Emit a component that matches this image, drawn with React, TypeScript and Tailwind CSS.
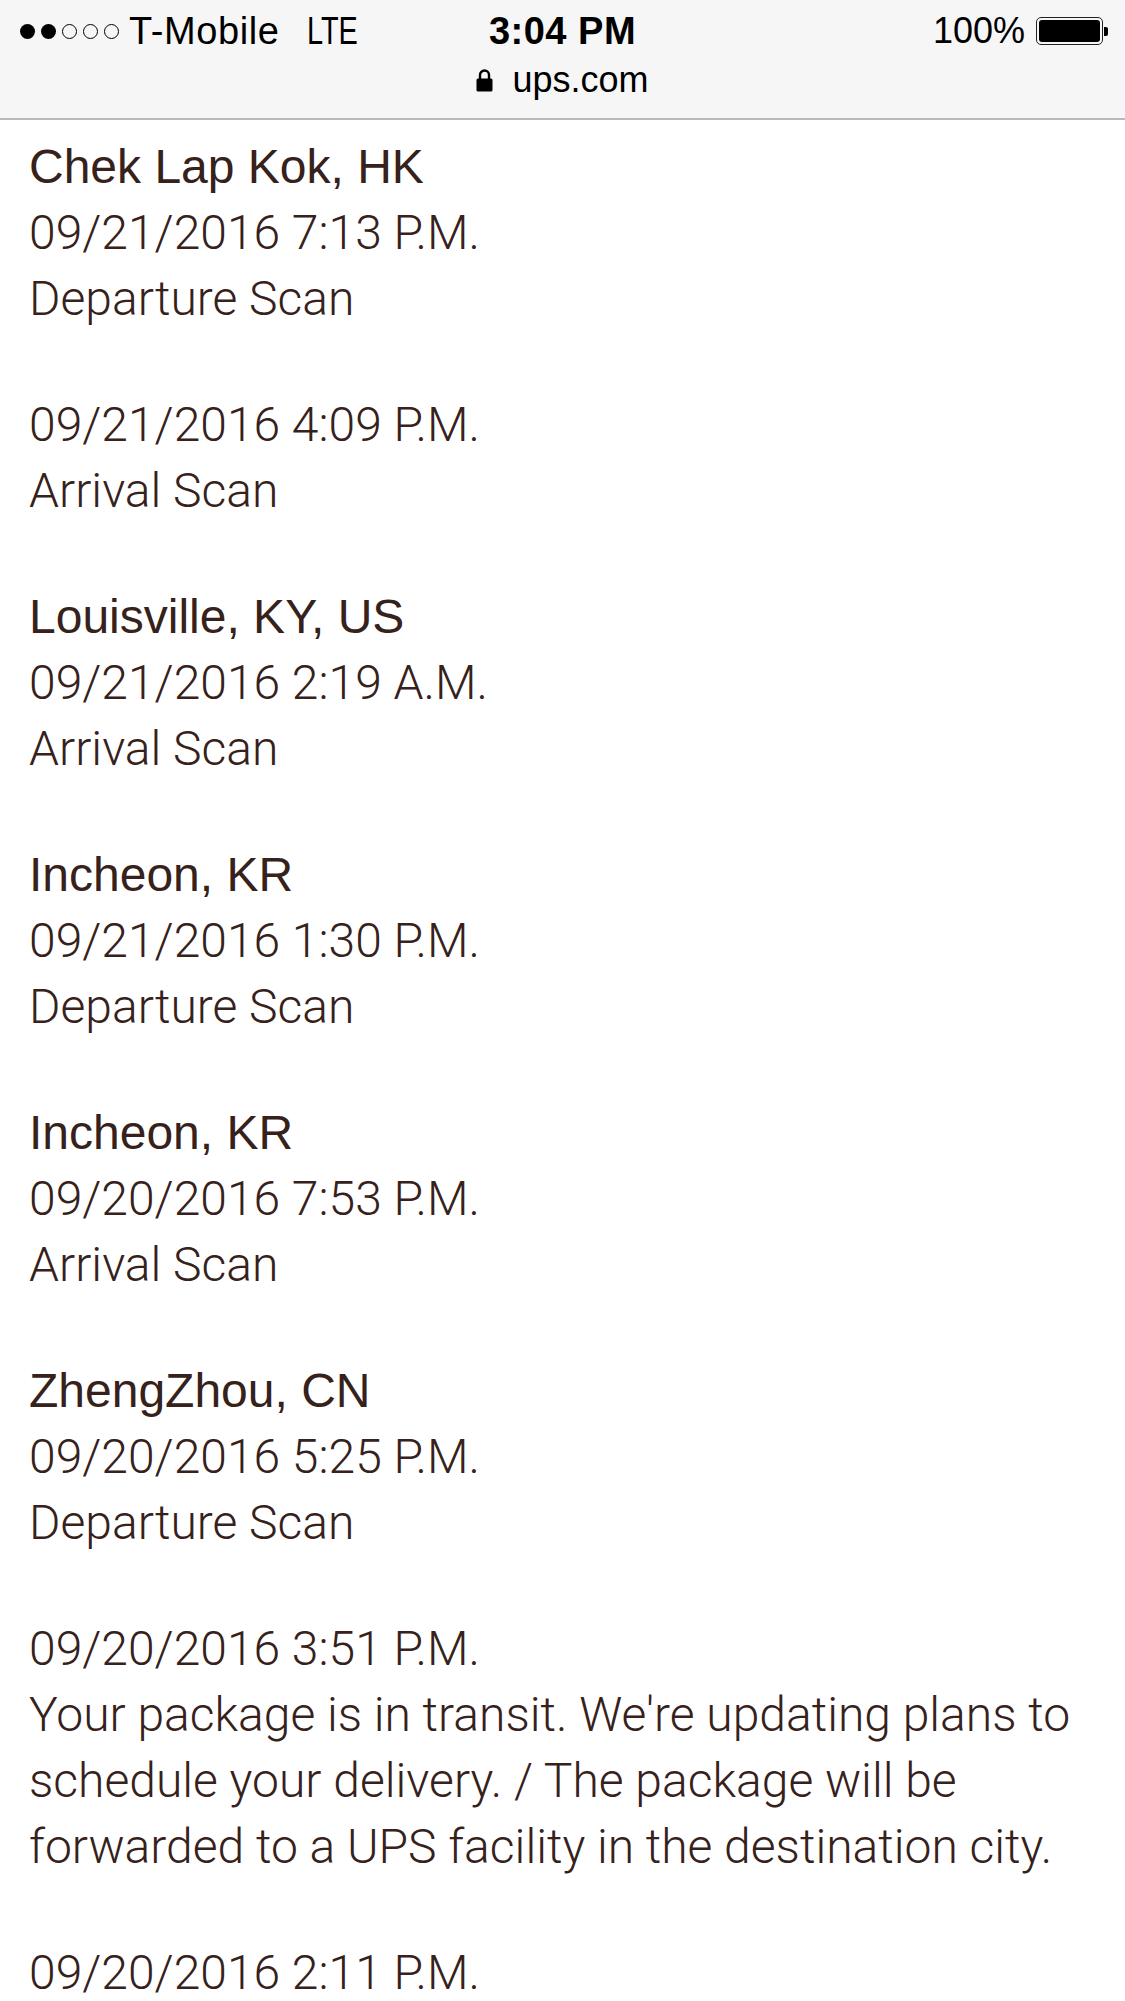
import React from "react";

interface ScanEvent {
  location?: string;
  time: string;
  lines: string[];
}

const events: ScanEvent[] = [
  {
    location: "Chek Lap Kok, HK",
    time: "09/21/2016 7:13 P.M.",
    lines: ["Departure Scan"],
  },
  { time: "09/21/2016 4:09 P.M.", lines: ["Arrival Scan"] },
  {
    location: "Louisville, KY, US",
    time: "09/21/2016 2:19 A.M.",
    lines: ["Arrival Scan"],
  },
  {
    location: "Incheon, KR",
    time: "09/21/2016 1:30 P.M.",
    lines: ["Departure Scan"],
  },
  {
    location: "Incheon, KR",
    time: "09/20/2016 7:53 P.M.",
    lines: ["Arrival Scan"],
  },
  {
    location: "ZhengZhou, CN",
    time: "09/20/2016 5:25 P.M.",
    lines: ["Departure Scan"],
  },
  {
    time: "09/20/2016 3:51 P.M.",
    lines: [
      "Your package is in transit. We're updating plans to",
      "schedule your delivery. / The package will be",
      "forwarded to a UPS facility in the destination city.",
    ],
  },
  { time: "09/20/2016 2:11 P.M.", lines: ["Origin Scan"] },
];

const SignalDots = () => (
  <div className="flex items-center gap-[6px]">
    {[0, 1, 2, 3, 4].map((i) =>
      i < 2 ? (
        <span key={i} className="w-[15px] h-[15px] rounded-full bg-black" />
      ) : (
        <span
          key={i}
          className="w-[15px] h-[15px] rounded-full border-[1.5px] border-black"
        />
      )
    )}
  </div>
);

const Battery = () => (
  <div className="flex items-center">
    <div className="w-[67px] h-[28px] rounded-[5px] border-[1.5px] border-[#222] p-[2px]">
      <div className="w-full h-full rounded-[3px] bg-black" />
    </div>
    <div className="w-[4px] h-[9px] rounded-r-[2px] bg-black ml-[1px]" />
  </div>
);

const Lock = () => (
  <svg width="17" height="24" viewBox="0 0 17 24">
    <path
      d="M4 11 V7 a4.5 4.5 0 0 1 9 0 V11"
      fill="none"
      stroke="black"
      strokeWidth="2.4"
    />
    <rect x="0.5" y="10.5" width="16" height="13" rx="1.5" fill="black" />
  </svg>
);

export default function App() {
  return (
    <div className="w-[1125px] min-h-[2001px] bg-white overflow-hidden">
      <header
        className="h-[120px] bg-[#f6f6f6] border-b-[2px] border-[#b9b9b9] text-black"
        style={{ fontFamily: '"Liberation Sans", Arial, sans-serif' }}
      >
        <div className="grid grid-cols-[1fr_auto_1fr] items-center h-[62px]">
          <div className="flex items-center pl-[20px] text-[38px]">
            <SignalDots />
            <span className="ml-[10px] tracking-[0.6px]">T-Mobile</span>
            <span className="ml-[27px] inline-block origin-left scale-x-[0.76]">
              LTE
            </span>
          </div>
          <div className="text-[38px] font-bold tracking-[0.5px]">3:04 PM</div>
          <div className="flex items-center justify-end pr-[17px] text-[36px]">
            <span className="mr-[11px]">100%</span>
            <Battery />
          </div>
        </div>
        <div className="flex items-center justify-center gap-[19px] h-[36px]">
          <Lock />
          <span className="text-[36px]">ups.com</span>
        </div>
      </header>

      <main className="pl-[29px] pt-[14px] text-[#36211b] text-[48px] leading-[66px]">
        {events.map((ev, idx) => (
          <section key={idx} className="mb-[60px]">
            {ev.location && (
              <div
                className="font-normal"
                style={{ fontFamily: '"Liberation Sans", Arial, sans-serif' }}
              >
                {ev.location}
              </div>
            )}
            <div
              className="font-light"
              style={{ fontFamily: "Roboto, 'Liberation Sans', sans-serif" }}
            >
              {ev.time}
            </div>
            {ev.lines.map((line, i) => (
              <div
                key={i}
                className="font-light whitespace-nowrap"
                style={{ fontFamily: "Roboto, 'Liberation Sans', sans-serif" }}
              >
                {line}
              </div>
            ))}
          </section>
        ))}
      </main>
    </div>
  );
}
